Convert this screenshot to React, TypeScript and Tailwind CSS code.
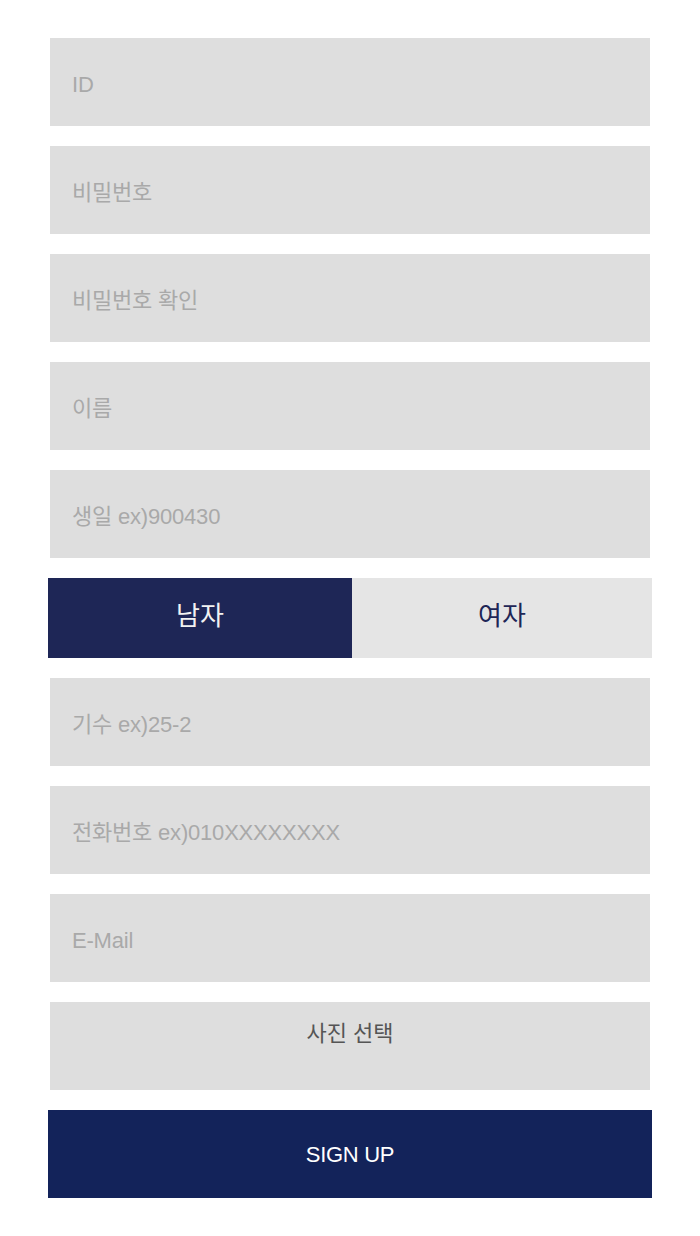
import { useState } from "react";

const fields = [
  { name: "id", placeholder: "ID", type: "text" },
  { name: "password", placeholder: "비밀번호", type: "password" },
  { name: "passwordConfirm", placeholder: "비밀번호 확인", type: "password" },
  { name: "name", placeholder: "이름", type: "text" },
  { name: "birth", placeholder: "생일 ex)900430", type: "text" },
];

const fields2 = [
  { name: "generation", placeholder: "기수 ex)25-2", type: "text" },
  { name: "phone", placeholder: "전화번호 ex)010XXXXXXXX", type: "text" },
  { name: "email", placeholder: "E-Mail", type: "email" },
];

function Field({ name, placeholder, type }: { name: string; placeholder: string; type: string }) {
  return (
    <input
      name={name}
      type={type}
      placeholder={placeholder}
      className="mx-[2px] block h-[88px] w-[600px] bg-[#dedede] pl-[22px] pt-[6px] text-[22px] tracking-[-0.2px] text-[#333] outline-none placeholder:text-[#a9a9a9]"
    />
  );
}

export default function App() {
  const [gender, setGender] = useState<"m" | "f">("m");

  return (
    <div className="min-h-[1236px] bg-white font-['Liberation_Sans','Noto_Sans_CJK_KR',sans-serif]">
      <form className="mx-auto flex w-[604px] flex-col gap-[20px] pt-[38px]" onSubmit={(e) => e.preventDefault()}>
        {fields.map((f) => (
          <Field key={f.name} {...f} />
        ))}

        {/* gender toggle */}
        <div className="flex h-[80px]">
          <button
            type="button"
            onClick={() => setGender("m")}
            className={`flex w-[304px] items-center justify-center pb-[4px] text-[26px] ${
              gender === "m" ? "bg-[#1e2656] text-[#f2f2f2]" : "bg-[#e5e5e5] text-[#1e2656]"
            }`}
          >
            남자
          </button>
          <button
            type="button"
            onClick={() => setGender("f")}
            className={`flex flex-1 items-center justify-center pb-[4px] text-[26px] ${
              gender === "f" ? "bg-[#1e2656] text-[#f2f2f2]" : "bg-[#e5e5e5] text-[#1e2656]"
            }`}
          >
            여자
          </button>
        </div>

        {fields2.map((f) => (
          <Field key={f.name} {...f} />
        ))}

        <label className="mx-[2px] block h-[88px] w-[600px] cursor-pointer bg-[#dedede] pt-[16px] text-center text-[22px] leading-[32px] text-[#555]">
          사진 선택
          <input type="file" className="hidden" />
        </label>

        <button
          type="submit"
          className="flex h-[88px] w-full items-center justify-center bg-[#13235a] text-[22px] tracking-[-0.3px] text-white"
        >
          SIGN UP
        </button>
      </form>
    </div>
  );
}
